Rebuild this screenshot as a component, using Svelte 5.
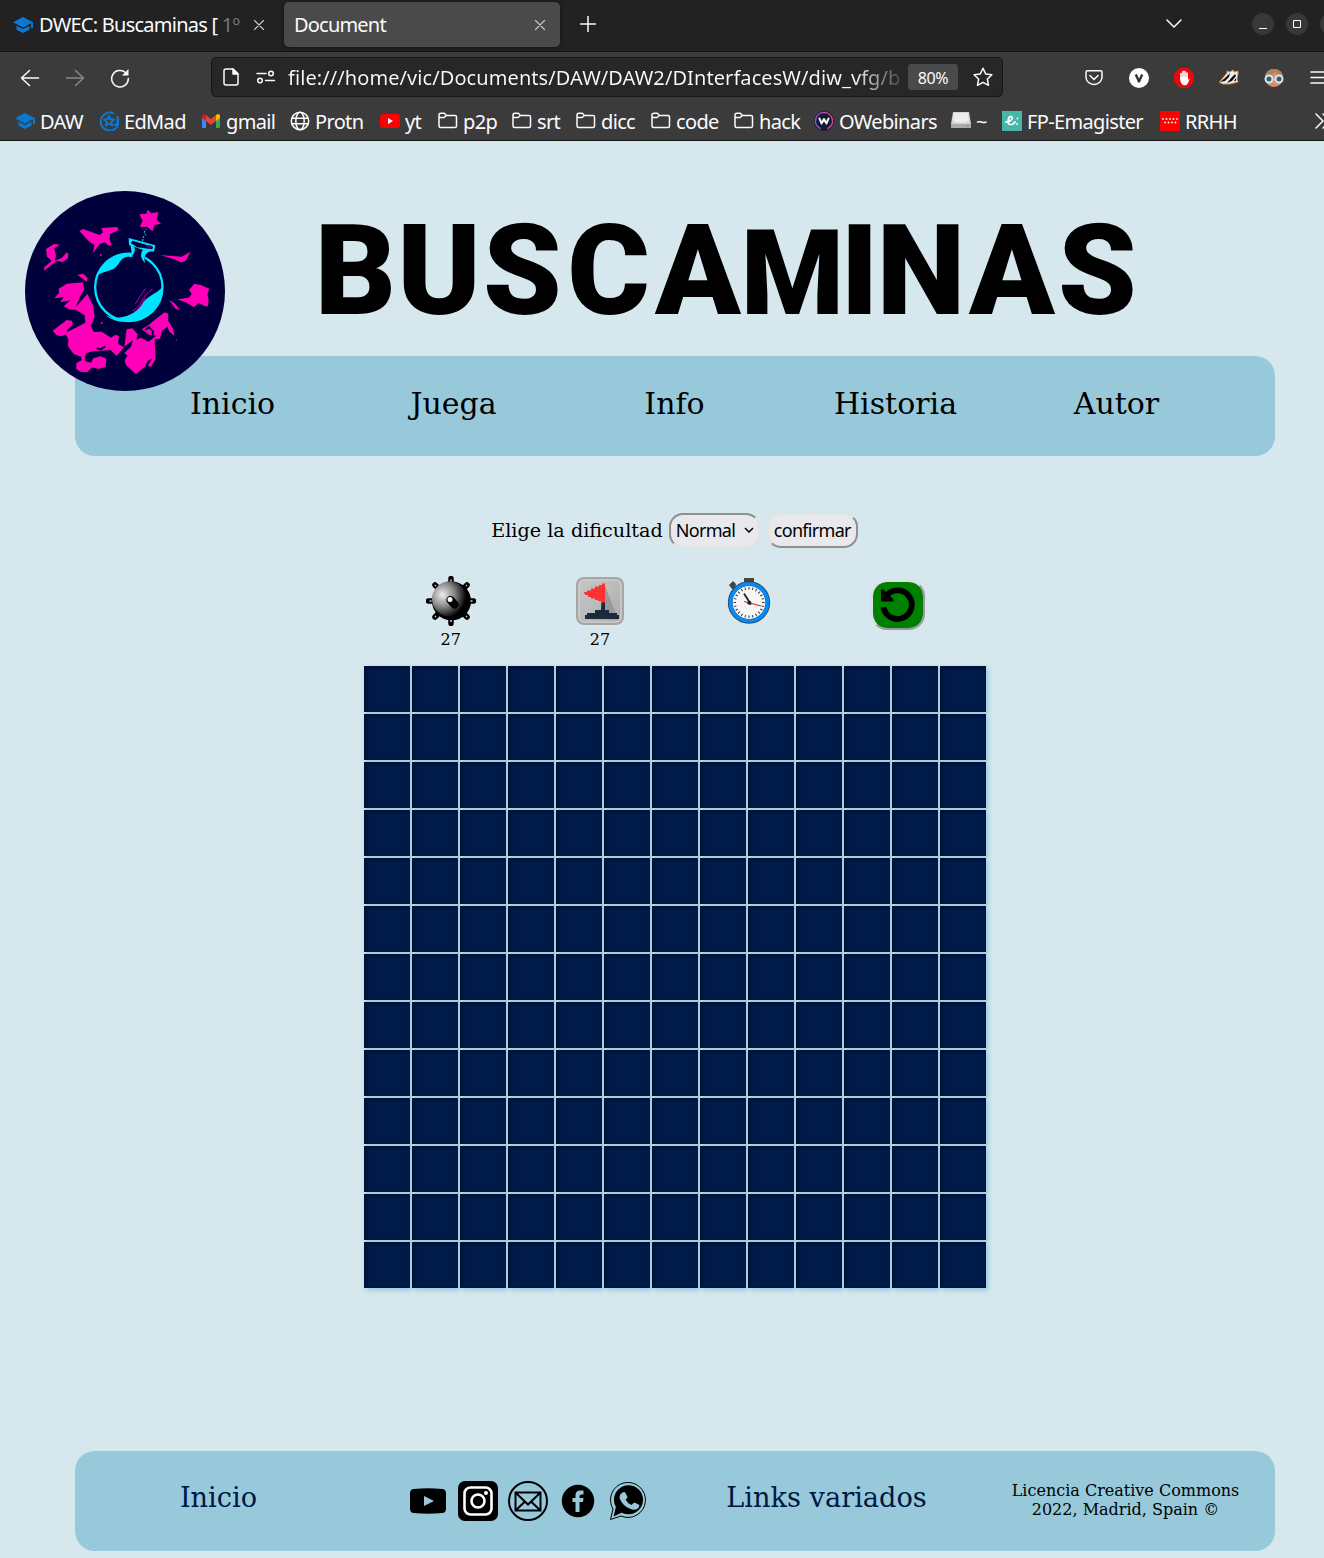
<script>
  const bookmarks = [
    ['cap', 'DAW'], ['edmad', 'EdMad'], ['gmail', 'gmail'], ['globe', 'Protn'], ['yt', 'yt'],
    ['folder', 'p2p'], ['folder', 'srt'], ['folder', 'dicc'], ['folder', 'code'], ['folder', 'hack'],
    ['ow', 'OWebinars'], ['disk', '~'], ['fp', 'FP-Emagister'], ['rrhh', 'RRHH']
  ];
  const links = ['Inicio', 'Juega', 'Info', 'Historia', 'Autor'];
  const cells = Array.from({ length: 169 });
  const ticks = Array.from({ length: 24 }, (_, i) => i * 15);
</script>

{#snippet icon(name)}
  <svg class="ico" viewBox="0 0 20 20" fill="none" stroke="#fbfbfe" stroke-width="1.5" stroke-linecap="round" stroke-linejoin="round">
    {#if name === 'cap'}
      <path d="M10 2 0 7.300l10 5.200 8-4.300v5h2V7.300z M3.500 10.700v4L10 18l6.500-3.300v-4L10 14z" fill="#0b78d4" stroke="none" />
    {:else if name === 'edmad'}
      <g stroke="#0b78d4" stroke-width="2"><path d="M14.500 2.400A9 9 0 1 0 18.500 6v5.500q-.5 2.500-3 2.500" /><path d="m10 5 1.400 3.200 3.600.3-2.700 2.400.8 3.500-3.100-1.900-3.100 1.900.8-3.500L5 8.500l3.600-.3z" /></g>
    {:else if name === 'gmail'}
      <g stroke="none"><path fill="#4285f4" d="M1 5v11q0 1 1 1h3V8z" /><path fill="#34a853" d="M19 5v11q0 1-1 1h-3V8z" /><path fill="#fbbc04" d="m15 4 2-1q2 0 2 2v2l-4 3z" /><path fill="#c5221f" d="M5 4 3 3Q1 3 1 5v2l4 3z" /><path fill="#ea4335" d="m5 4 5 4 5-4v6l-5 4-5-4z" /></g>
    {:else if name === 'globe'}
      <circle cx="10" cy="10" r="8.700" /><ellipse cx="10" cy="10" rx="4.200" ry="8.700" /><path d="M2 7.300h16M2 12.700h16" />
    {:else if name === 'yt'}
      <rect y="3" width="20" height="14" rx="3.500" fill="#f00" stroke="none" /><path d="m8 7 5 3-5 3z" fill="#fff" stroke="none" />
    {:else if name === 'folder'}
      <path d="M1 14V4q0-1.800 1.800-1.800h3.500L8.500 4.500H17q1.500 0 1.500 1.500v9q0 1.500-1.500 1.500H2.500Q1 16.500 1 14M1 6.500h5l2.500-2" />
    {:else if name === 'ow'}
      <circle cx="10" cy="10" r="10" fill="#141c33" stroke="none" /><path d="M6 17.500A8.500 8.500 0 0 1 10 1.500" stroke="#8a55d8" /><path d="M10 1.500a8.500 8.500 0 0 1 4 16" stroke="#e0448c" /><path d="m5.500 7.500 2 5L10 8l2.500 4.500 2-5" stroke-width="2" />
    {:else if name === 'disk'}
      <path d="M2 1h16l2 12v4H0v-4z" fill="#d5d5d5" stroke="none" /><path d="M0 13h20v4H0z" fill="#aaa" stroke="none" /><path d="M3 2h14l1 8q-8 3-16 0z" fill="#ededed" stroke="none" /><path d="M16.500 15h.5" stroke="#4b4" />
    {:else if name === 'fp'}
      <path d="M0 0h20v20H0z" fill="#48b5a9" stroke="none" /><path d="M4 11q7-1 6-5-3-2-4 4 0 5 5 3l2-2M15.500 7.500v.1M15 13v.1" stroke-width="1.800" />
    {:else}
      <path d="M0 0h20v20H0z" fill="#f00" stroke="none" /><path d="M3 8v.1M6.500 8v.1M10 8v.1M13.500 8v.1M17 8v.1M5 11.500v.1M8.500 11.500v.1M12 11.500v.1M15.500 11.500v.1" stroke-width="1.800" />
    {/if}
  </svg>
{/snippet}

<div class="browser">
  <div class="tabs">
    <div class="tab">
      {@render icon('cap')}
      <span class="tab-name">DWEC: Buscaminas [ <span class="faded">1º</span></span>
      <svg class="x" viewBox="0 0 10 10"><path d="m.5.5 9 9m0-9-9 9" /></svg>
    </div>
    <div class="tab active">
      <span>Document</span>
      <svg class="x" viewBox="0 0 10 10"><path d="m.5.5 9 9m0-9-9 9" /></svg>
    </div>
    <svg class="plus" viewBox="0 0 16 16"><path d="M8 .5v15M.5 8h15" /></svg>
    <svg class="down" viewBox="0 0 16 10"><path d="m1 1 7 7 7-7" /></svg>
    <div class="win"><svg viewBox="0 0 22 22"><path d="M7 15.500h8" /></svg></div>
    <div class="win"><svg viewBox="0 0 22 22"><path d="M7.500 7.500h7v7h-7z" /></svg></div>
    <div class="win"></div>
  </div>

  <div class="toolbar">
    <div class="navbtns">
      <svg viewBox="0 0 20 20"><path d="M18.500 10H1.500m8-7.500L1.500 10l8 7.500" /></svg>
      <svg class="dim" viewBox="0 0 20 20"><path d="M1.500 10h17m-8-7.500 8 7.500-8 7.500" /></svg>
      <svg viewBox="0 0 20 20"><path d="M18.300 10.500A8.300 8.300 0 1 1 15.500 4.500" /><path d="M12 7.500h6.500V1z" fill="#fbfbfe" stroke="none" /></svg>
    </div>
    <div class="url">
      <svg class="page" viewBox="0 0 16 18"><path d="M3 1h7l5 5v9q0 2-2 2H3q-2 0-2-2V3q0-2 2-2z" /><path d="M10 1v5h5z" fill="#fbfbfe" /></svg>
      <svg class="perm" viewBox="0 0 20 14"><circle cx="15" cy="3.500" r="2.300" /><path d="M1 3.500h9M9.500 10.500H18.500" /><circle cx="4" cy="10.500" r="2.300" /></svg>
      <span class="address">file:///home/vic/Documents/DAW/DAW2/DInterfacesW/diw_vfg/b</span>
      <span class="zoom">80%</span>
      <svg class="star" viewBox="0 0 20 20"><path d="m10 1.200 2.700 5.700 6.200.8-4.500 4.300 1.100 6.300-5.500-3-5.500 3 1.100-6.300L1.100 7.700l6.200-.8z" /></svg>
    </div>
    <div class="exts">
      <svg viewBox="0 0 20 20"><path d="M3.500 2.700h13q1.500 0 1.500 1.500V9a8 7.500 0 0 1-16 0V4.200q0-1.500 1.500-1.500z" /><path d="m6 7.500 4 4 4-4" /></svg>
      <svg viewBox="0 0 20 20"><circle cx="10" cy="10" r="10" fill="#fff" stroke="none" /><path class="vee" d="m6.800 6.500 3.200 7 3.200-7" /></svg>
      <svg viewBox="0 0 20 20"><path d="M6 0h8l6 6v8l-6 6H6l-6-6V6z" fill="#e60b0b" stroke="none" /><path d="M7 11V5.500M9 10V3.500M11 10V3.500M13 11V5" stroke-width="1.700" /><path d="M6 9h8v3l2-2-2 5q-1 3-5 2-3-2-3-8z" fill="#fff" stroke="none" /></svg>
      <svg viewBox="0 0 20 20"><path class="badger" d="M.5 14 8 5V3l3 1 3-2 1 2 4-1v3l-1 5 1 3-8 2H4z" /><path class="stripe" d="m1 14 5-4 5-5-1 4-4 4zM8 15l5-6 3-3 1 2-4 5zM15 13l2-3v3z" /></svg>
      <svg viewBox="0 0 20 20"><circle cx="10" cy="10" r="9" fill="#dd8b60" stroke="none" /><path d="M1 10Q1 1 10 1t9 9l-5-3-3-4-3 4z" fill="#a9855a" stroke="none" /><g class="goggles"><circle cx="5" cy="11" r="3.500" /><circle cx="15" cy="11" r="3.500" /></g></svg>
      <svg viewBox="0 0 20 20"><path d="M2 4h16M2 9.500h16M2 15h16" /></svg>
    </div>
  </div>

  <div class="bookmarks">
    {#each bookmarks as [name, label]}
      <div class="bm">{@render icon(name)}<span>{label}</span></div>
    {/each}
    <svg class="more" viewBox="0 0 16 16"><path d="m1 1 7 7-7 7M8 1l7 7-7 7" /></svg>
  </div>
</div>

<main>
  <svg class="logo" viewBox="0 0 660 660">
    <circle cx="330" cy="333" r="300" fill="#00003c" />
    <g fill="#ff00b8">
      <path d="m397 89 12 11 21-4-5 23 13 12-20 4-5 19-17-14-22 1 9-19-10-19 21-2z" />
      <path d="m193 153 11-6 50 18 10-8-5-13 48-3 4 10-26 11-1 17 6 15-8 4-13-11-14 5-12 15-9 12 4-25-14-8z" />
      <path d="m93 207 24-15 18 2-17 11 5 23-4 14 22-9 14-16 5 6-2 13-16 10-16-4-39 30 1-10 22-20-14-12z" />
      <path d="m435 225 65 5 27-15-16 29-13 3-20-9zM187 284l18-3 13 14-2 10-15-10z" />
      <path d="m131 326 25-15 47-4 5 22-12 19-14 34 35-40 17 34 5 34-11 28 8 18 24-1 28 18 12-8 12 2-3 25 18 10-22 26-19-18-27 2-26 2-20 6-4 18 2 8-10-2-3-14-22-8-17-23 1-20-9-20 60-31-2-22-27-17-20-1-16-9 20-18-31 6 12-16-29 4 14-16z" />
      <path d="m335 448 17-3 16 18-4 16 14-6 22 12 24-18-22-3-22-16 20-12 14-12 35-27 11 4-1 20 15 25 5 22-17-14-4-14-17 12-6 24-16 1 1 21 2 40-14 22-10-2 14-22-14 6-8 18-27 22-30-26-4-17 9-12-10-8 20-19 6-20-26 20z" />
      <path d="m113 452 42-32 16 2 2 13-17 15 3 11-19 8-15-3zM184 549l16-8 28 7 7-13 22-6 17 7-2 25-22 6-18-5-16 15-19-2-13-8zM487 358l35-5 8-11-8-12 16-19 19 4 26 11-6 18 4 13-2 22-11-1-17-9-14 13-25-15zM462 360l16 9 17 20-13-2z" />
      <circle cx="257" cy="225" r="3" /><circle cx="260" cy="429" r="3" /><circle cx="484" cy="479" r="2" />
    </g>
    <path d="m245 505 12 3 14-9m56-55-12 28m75-22 12-8 12 12-2 18" stroke="#00003c" stroke-width="6" fill="none" />
    <path d="m383 184 2-14 7-6-5-8 7-8" stroke="#00e5ff" stroke-dasharray="7 3" stroke-width="3" fill="none" />
    <circle cx="341.500" cy="322" r="108" fill="#00003c" />
    <circle cx="341.500" cy="322" r="101" fill="none" stroke="#00e5ff" stroke-width="7" />
    <path d="m347 240 5-50 42 5-5 45z" fill="#00003c" />
    <g fill="#00e5ff">
      <path d="M347 219c-48-3-92 30-102 69 18-18 50-10 66-37 12-20 22-22 42-20z" />
      <path d="M444 315c-6 22-40 25-63 56-15 23-32 37-72 42-20 2-35-5-42-12 30 32 101 36 142-8 22-22 35-49 35-78z" />
      <path d="m346 195 9 2q14 17-13 40 12-15 4-42zM385 208l25 5q-27 5-20 36-21-22-5-41z" />
      <path fill-rule="evenodd" d="m341 174 80 22-4 19-26-3-49-17zm11 8-4 8 18 12 46 6 2-8z" />
    </g>
    <path d="m390 200 15-5 7 5-4 7z" fill="#560052" />
    <path d="M361 372q14-24 31-46M353 393c33-19 21-40 60-66M364 392q18-14 26-38" stroke="#c000a0" stroke-width="3" fill="none" />
  </svg>

  <h1>
    <svg viewBox="0 0 860 120" aria-label="BUSCAMINAS"><text x="56.500 140 223.500 309.500 399 493.500 560.500 622 713 798.500" y="103">BUSCA<tspan class="narrow">M</tspan>INAS</text></svg>
  </h1>

  <nav>
    {#each links as link}<a href="#top">{link}</a>{/each}
  </nav>

  <form>
    <label for="level">Elige la dificultad</label>
    <button type="button" class="select" id="level">Normal<svg viewBox="0 0 10 6"><path d="m1 1 4 4 4-4" /></svg></button>
    <button type="button" class="confirm">confirmar</button>
  </form>

  <section class="status">
    <div>
      <svg viewBox="0 0 50 50">
        <defs><radialGradient id="ball" cx=".3" cy=".38" r=".68"><stop offset="0" stop-color="#eee" /><stop offset=".5" stop-color="#888" /><stop offset="1" /></radialGradient></defs>
        <path d="M25 2.500v45M2.500 25h45M9 9l32 32M41 9 9 41" stroke="#000" stroke-width="5.500" stroke-linecap="round" />
        <circle cx="25.500" cy="25" r="19.500" />
        <circle cx="23.500" cy="23" r="17.500" fill="url(#ball)" />
        <path d="M25 3.500v2M3.500 25h2M44.500 25h2M9 9l1 1M41 9l-1 1M9 41l1-1M41 41l-1-1M25 46v-2" stroke="#ccc" stroke-width="1.500" />
        <path d="m24.500 24 4 4.500" stroke="#000" stroke-width="8" stroke-linecap="round" /><circle cx="24" cy="23.500" r="2.500" fill="#fff" />
      </svg>
      <span>27</span>
    </div>
    <div>
      <svg viewBox="0 0 50 50">
        <defs><linearGradient id="steel" x2="1" y2="1"><stop stop-color="#c6c6c6" /><stop offset=".5" stop-color="#bbb" /><stop offset="1" stop-color="#aaa" /></linearGradient></defs>
        <rect x="1" y="1" width="48" height="48" rx="8" fill="#a6a6a6" />
        <rect x="4" y="4" width="42" height="42" rx="5" fill="url(#steel)" stroke="#cfcfcf" stroke-width="1.500" />
        <path d="m29 8 13 32H30z" fill="#999" />
        <path d="M26.500 24h3.500v10h4v3h8v2h2v4H10v-4h2v-2h8v-3h6z" fill="#1c2b3c" />
        <path d="M30 7.500v19h-4v-1.500h-3v-1h-3v-1.500h-4v-1.500h-3v-2h-3v-1.500h-1v-1.500h3v-1.500h4v-2h4v-2h4v-1.500h3v-1.500z" fill="#ff3131" />
      </svg>
      <span>27</span>
    </div>
    <div>
      <svg viewBox="0 0 50 50">
        <path d="M20 2h10v6H20zM5 9l4-4 3 3-1 5H8z" fill="#444" />
        <circle cx="25" cy="26.500" r="18.800" fill="#f6f6f6" stroke="#345" stroke-width="4.700" />
        <circle cx="25" cy="26.500" r="18.500" fill="none" stroke="#008cff" stroke-width="3.600" />
        {#each ticks as deg}<path d="M25 11v2.500" stroke="#333" transform="rotate({deg} 25 26.5)" />{/each}
        <path d="m20 17.500 7 11" stroke="#222" stroke-width="1.800" /><path d="m20 25.500 17 4.500" stroke="#e22" stroke-width="1.200" /><circle cx="25.300" cy="26.700" r="2" fill="#222" />
      </svg>
    </div>
    <div>
      <button type="button" class="reset" aria-label="reset">
        <svg viewBox="0 0 50 46"><path d="M10.500 25.300a14.300 14.300 0 1 0 4-12.800" fill="none" stroke="#000" stroke-width="5.800" /><path d="M8 8q1.500-1.500 3 0l9.500 9.500q1 2-1 2H9q-1 0-1-1z" /></svg>
      </button>
    </div>
  </section>

  <div class="board">
    {#each cells as _}<div class="cell"></div>{/each}
  </div>

  <footer>
    <a href="#top">Inicio</a>
    <div class="social">
      <svg viewBox="0 0 40 40"><path d="M6 8q14-1.500 28 0 4 0 4 4.500v15q0 4.500-4 4.500-14 1.500-28 0-4 0-4-4.500v-15Q2 8 6 8z" /><path d="m16 15 10 5-10 5z" class="hole" /></svg>
      <svg viewBox="0 0 40 40"><rect width="40" height="40" rx="7" /><g fill="none" stroke="#fff" stroke-width="2.600"><rect x="6.500" y="6.500" width="27" height="27" rx="6" /><circle cx="20" cy="20" r="6.500" /></g><circle cx="28" cy="12" r="2" fill="#fff" /></svg>
      <svg viewBox="0 0 40 40" fill="none" stroke="#000" stroke-width="2"><circle cx="20" cy="20" r="19" /><path d="M7.500 11.500h25v18h-25zl12.500 12 12.500-12M7.500 29.500l9-8.500M32.500 29.500l-9-8.500" /></svg>
      <svg viewBox="0 0 40 40"><circle cx="20" cy="20" r="16.200" /><path d="M17.500 31v-10h-3v-4h3v-3q0-4.500 5-4.500h3v4h-2q-2 0-2 1.500v2h4l-.5 4h-3.500v10z" class="hole" /></svg>
      <svg viewBox="0 0 40 40"><path d="M5 28a17.500 17.500 0 1 1 8 7L2.500 38.500z" fill="none" stroke="#000" /><circle cx="20.500" cy="18.800" r="14.500" /><path d="m5.500 35.500 2.500-10 6 6z" /><path d="m12.500 13 3-2q1-.5 2 1l2 4q0 1-2 2.500 2 4 6 5.500l2-2q1-.5 2 0l4 2-1 3q-3 3-8 1-8-3-11-11 0-2 1-4z" class="hole" /></svg>
    </div>
    <a href="#top">Links variados</a>
    <p>Licencia Creative Commons<br />2022, Madrid, Spain ©</p>
  </footer>
</main>

<style>
  :global(body) { background: #d6e7ed; overflow: hidden; }
  * { box-sizing: border-box; }
  svg { display: block; flex: none; }
  .browser { height: 141px; width: 1324px; overflow: hidden; background: #3b3b3b; color: #fbfbfe; font: 20px/24px "Noto Sans", sans-serif; border-bottom: 1px solid #151515; }
  .browser svg { fill: none; stroke: #fbfbfe; stroke-width: 1.5; stroke-linecap: round; stroke-linejoin: round; }
  .browser .vee { stroke: #333; stroke-width: 2.4; stroke-linecap: butt; }
  .badger { fill: #eee; stroke: #d99039; stroke-width: 1; }
  .stripe { fill: #111; stroke: none; }
  .goggles { fill: #456; stroke: #c8eef8; stroke-width: 2; }
  .tabs { height: 52px; background: #222; border-bottom: 1px solid #141414; display: flex; align-items: center; padding: 0 0 3px 13px; }
  .tabs > * { flex: none; }
  .tab { display: flex; align-items: center; width: 271px; height: 45px; letter-spacing: -.75px; white-space: nowrap; padding-top: 1px; }
  .tab.active { width: 276px; background: #4a4a4a; border-radius: 5px; padding: 1px 15px 0 10px; justify-content: space-between; box-shadow: 0 0 4px #111; letter-spacing: -.8px; }
  .ico { width: 20px; height: 20px; }
  .tab-name { margin-left: 6px; width: 214px; height: 28px; line-height: 28px; }
  .faded { color: #777; }
  .browser .x { width: 10px; height: 10px; stroke-width: 1.1; stroke: #ccc; }
  .tab:first-child .x { margin-left: 1px; }
  .plus { width: 16px; height: 16px; margin-left: 20px; }
  .down { width: 16px; height: 10px; margin-left: 570px; margin-right: 70px; }
  .win { width: 22px; height: 22px; border-radius: 50%; background: #383838; margin-right: 12px; }
  .browser .win svg { stroke-width: 1; stroke-linecap: butt; }
  .toolbar { height: 50px; display: flex; align-items: center; padding-top: 1px; }
  .toolbar > * { flex: none; }
  .navbtns { display: flex; gap: 25px; width: 211px; padding-left: 20px; }
  .navbtns svg, .exts svg { width: 20px; height: 20px; }
  .dim { opacity: .4; }
  .url { width: 792px; height: 40px; margin-top: -1px; background: #272727; border: 1px solid #151515; border-radius: 5px; display: flex; align-items: center; padding-left: 11px; }
  .page { width: 16px; height: 18px; }
  .perm { width: 20px; height: 14px; margin: 0 12px 0 17px; }
  .address { width: 614px; height: 28px; line-height: 30px; white-space: nowrap; letter-spacing: .08px; background: linear-gradient(90deg, #fbfbfe 92%, #444 100%); -webkit-background-clip: text; background-clip: text; color: transparent; }
  .zoom { width: 50px; height: 26px; margin: 0 15px 0 6px; background: #4a4a4a; border-radius: 3px; text-align: center; font-size: 16px; line-height: 28px; letter-spacing: -.4px; }
  .star { width: 20px; height: 20px; }
  .exts { display: flex; gap: 25px; margin-left: 81px; }
  .bookmarks { height: 38px; display: grid; grid-template-columns: 84px 102px 89px 90px 58px 74px 64px 75px 83px 80px 137px 51px 158px 155px 16px; align-items: center; padding-left: 15px; }
  .bm { display: flex; align-items: center; gap: 5px; white-space: nowrap; letter-spacing: -.65px; }
  .bm span { padding-top: 2px; }
  .more { width: 16px; height: 16px; }

  main { position: relative; width: 1324px; height: 1417px; overflow: hidden; font-family: "DejaVu Serif", serif; color: #000; }
  .logo { position: absolute; left: 15px; top: 39px; width: 220px; height: 220px; z-index: 1; }
  h1 { margin: 0; height: 215px; padding: 70px 0 0 299px; }
  h1 svg { width: 860px; height: 120px; overflow: visible; }
  h1 text { font: 900 126px Roboto, sans-serif; text-anchor: middle; }
  .narrow { font-size: 118px; }
  a { color: inherit; text-decoration: none; }
  nav { width: 1200px; height: 100px; margin-left: 75px; padding: 0 47px; background: #97c9da; border-radius: 20px; display: grid; grid-template-columns: repeat(5, 221px); text-align: center; font-size: 30px; line-height: 95px; }
  form { display: flex; justify-content: center; align-items: center; height: 35px; margin: 57px 0 0 25px; font-size: 19.200px; }
  label { margin-right: 6px; }
  button { font: 18px "Noto Sans", sans-serif; letter-spacing: -.7px; color: #000; padding: 0; background: #e9e9ed; border: 2px solid #e3e3e3; border-radius: 14px; }
  .select, .confirm { width: 91px; height: 35px; padding-bottom: 2px; border-color: #e3e3e3 #8f8f8f #8f8f8f #e3e3e3; }
  .select { border-color: #8f8f8f #e3e3e3 #e3e3e3 #8f8f8f; display: flex; align-items: center; justify-content: space-between; padding: 0 4px 2px 5px; margin-right: 7px; }
  .select svg { width: 10px; height: 6px; fill: none; stroke: #000; stroke-width: 1.5; }
  .status { display: grid; grid-template-columns: repeat(4, 149.300px); height: 90px; margin: 28px 0 0 376px; font-size: 16px; line-height: 19px; }
  .status div { display: flex; flex-direction: column; align-items: center; }
  .status div > svg { width: 50px; height: 50px; }
  .status span { margin-top: 4px; }
  .reset { width: 54px; height: 50px; margin: 4px 1px 0 0; background: green; background-clip: padding-box; border-color: #d6e1e3 #999 #999 #d6e1e3; border-radius: 16px; }
  .reset svg { width: 50px; height: 46px; }
  .board { display: grid; grid-template-columns: repeat(13, 46px); grid-auto-rows: 46px; gap: 2px; width: 622px; margin-left: 364px; isolation: isolate; }
  .cell { background: #001b48; position: relative; box-shadow: 2px 2px 5px #8cc8dc, inset 1px 1px 2px 2px #00113a; }
  .cell::before { content: ""; display: block; width: 46px; height: 46px; box-shadow: 2px 2px 0 #a6d0de; clip-path: inset(0 -2px -2px 0); }
  .cell:nth-child(13n)::before { box-shadow: 0 2px 0 #a6d0de; }
  .cell:nth-last-child(-n + 13)::before { box-shadow: 2px 0 0 #a6d0de; }
  .cell:last-child::before { box-shadow: none; }
  footer { width: 1200px; height: 100px; margin: 163px 0 0 75px; background: #97c9da; border-radius: 20px; display: grid; grid-template-columns: 287px 332px 265px 316px; text-align: center; font-size: 27.200px; line-height: 94px; color: #001845; }
  .social { display: flex; gap: 10px; justify-content: center; padding-top: 30px; }
  .social svg { width: 40px; height: 40px; }
  .hole { fill: #97c9da; }
  footer p { margin: 0; padding: 30px 0 0 17px; font-size: 16px; line-height: 19px; color: #000; }
</style>
